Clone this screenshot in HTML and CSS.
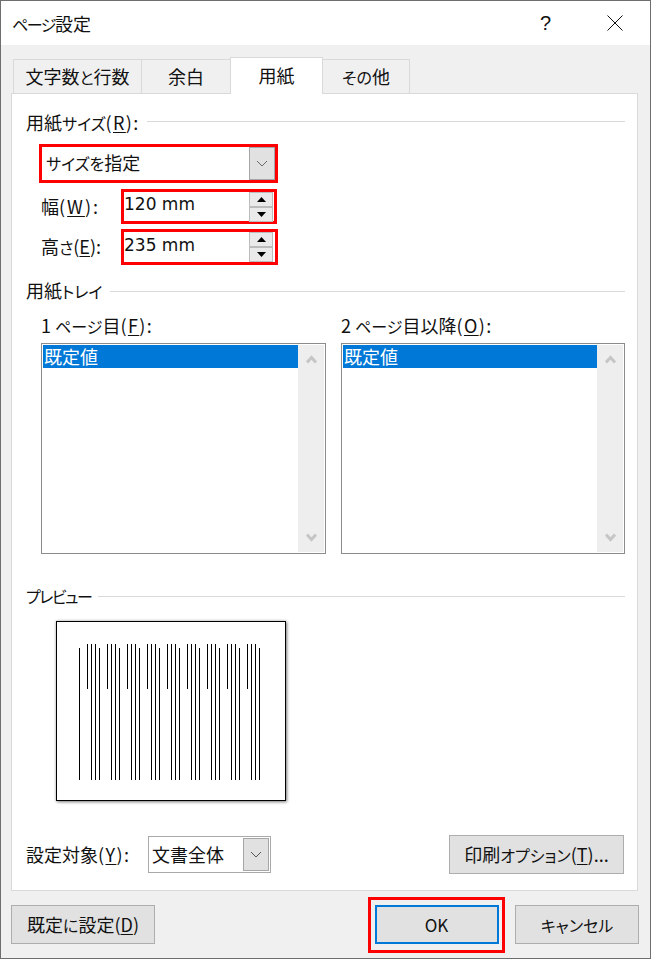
FILE: index.html
```html
<!DOCTYPE html>
<html lang="ja">
<head>
<meta charset="utf-8">
<title>ページ設定</title>
<link rel="stylesheet" href="styles.css">
</head>
<body>
<div class="window">
  <header class="titlebar">
    <span class="title"><span class="k k-tight">ページ</span>設定</span>
    <span class="help">?</span>
    <svg class="close" width="16" height="16" viewBox="0 0 16 16"><path d="M0.5 0.5L15.5 15.5M15.5 0.5L0.5 15.5" stroke="#111" stroke-width="1" fill="none"/></svg>
  </header>
  <nav class="tabs">
    <div class="tab tab-a"><span>文字数<span class="k">と</span>行数</span></div>
    <div class="tab tab-b">余白</div>
    <div class="tab tab-c active">用紙</div>
    <div class="tab tab-d"><span><span class="k">その</span>他</span></div>
  </nav>
  <main class="panel">
    <div class="head"><span>用紙<span class="k">サイズ</span><span class="l">(<u>R</u>):</span></span><i></i></div>
    <div class="red red-select">
      <span class="value"><span class="k">サイズを</span>指定</span>
      <span class="dd dd-tall"><svg width="12" height="7" viewBox="0 0 12 7"><path d="M1 1L6 6L11 1" stroke="#6a6a6a" fill="none"/></svg></span>
    </div>
    <div class="field">
      <span class="label">幅<span class="l-w">(<u>W</u>):</span></span>
      <div class="red red-spin">
        <span class="num">120 mm</span>
        <span class="spin">
          <b><svg width="9" height="5" viewBox="0 0 9 5"><path d="M4.5 0L9 5H0Z"/></svg></b>
          <b><svg width="9" height="5" viewBox="0 0 9 5"><path d="M0 0H9L4.5 5Z"/></svg></b>
        </span>
      </div>
    </div>
    <div class="field field-2">
      <span class="label">高<span class="k">さ</span>(<u>E</u>):</span>
      <div class="red red-spin">
        <span class="num">235 mm</span>
        <span class="spin">
          <b><svg width="9" height="5" viewBox="0 0 9 5"><path d="M4.5 0L9 5H0Z"/></svg></b>
          <b><svg width="9" height="5" viewBox="0 0 9 5"><path d="M0 0H9L4.5 5Z"/></svg></b>
        </span>
      </div>
    </div>
    <div class="head head-tray"><span>用紙<span class="k">トレイ</span></span><i></i></div>
    <div class="trays">
      <section class="tray">
        <div class="tray-label">1 <span class="k">ページ</span>目<span class="l">(<u>F</u>):</span></div>
        <div class="list">
          <div class="items"><div class="item">既定値</div></div>
          <div class="bar">
            <svg width="11" height="9" viewBox="0 0 11 9"><path d="M1 7.5L5.5 2.5L10 7.5" stroke="#c6c6c6" stroke-width="3" fill="none"/></svg>
            <svg width="11" height="9" viewBox="0 0 11 9"><path d="M1 1.5L5.5 6.5L10 1.5" stroke="#c6c6c6" stroke-width="3" fill="none"/></svg>
          </div>
        </div>
      </section>
      <section class="tray tray-r">
        <div class="tray-label">2 <span class="k">ページ</span>目以降<span class="l">(<u>O</u>):</span></div>
        <div class="list">
          <div class="items"><div class="item">既定値</div></div>
          <div class="bar">
            <svg width="11" height="9" viewBox="0 0 11 9"><path d="M1 7.5L5.5 2.5L10 7.5" stroke="#c6c6c6" stroke-width="3" fill="none"/></svg>
            <svg width="11" height="9" viewBox="0 0 11 9"><path d="M1 1.5L5.5 6.5L10 1.5" stroke="#c6c6c6" stroke-width="3" fill="none"/></svg>
          </div>
        </div>
      </section>
    </div>
    <div class="head head-prev"><span><span class="k k-tight">プレビュー</span></span><i></i></div>
    <div class="page">
      <svg width="228" height="178" viewBox="0 0 228 178">
        <g stroke="#000" stroke-width="1">
          <path d="M22.5 26V158"/>
          <path d="M30.5 22V67M34.5 22V158M38.5 22V158M42.5 26V158"/>
          <path d="M50.5 22V67M54.5 22V158M58.5 22V158M62.5 26V158"/>
          <path d="M70.5 22V67M74.5 22V158M78.5 22V158M82.5 26V158"/>
          <path d="M90.5 22V67M94.5 22V158M98.5 22V158M102.5 26V158"/>
          <path d="M110.5 22V67M114.5 22V158M118.5 22V158M122.5 26V158"/>
          <path d="M130.5 22V67M134.5 22V158M138.5 22V158M142.5 26V158"/>
          <path d="M150.5 22V67M154.5 22V158M158.5 22V158M162.5 26V158"/>
          <path d="M170.5 22V67M174.5 22V158M178.5 22V158M182.5 26V158"/>
          <path d="M190.5 22V67M194.5 22V158M198.5 22V158M202.5 26V158"/>
        </g>
      </svg>
    </div>
    <div class="apply">
      <span class="apply-label">設定対象<span class="l">(<u>Y</u>):</span></span>
      <div class="select">
        <span class="value">文書全体</span>
        <span class="dd"><svg width="12" height="7" viewBox="0 0 12 7"><path d="M1 1L6 6L11 1" stroke="#555" fill="none"/></svg></span>
      </div>
      <button class="btn btn-print">印刷<span class="k">オプション</span>(<u>T</u>)...</button>
    </div>
  </main>
  <footer class="footer">
    <button class="btn btn-default">既定<span class="k">に</span>設定(<u>D</u>)</button>
    <div class="red red-ok"><button class="btn btn-ok">OK</button></div>
    <button class="btn btn-cancel"><span class="k">キャンセル</span></button>
  </footer>
</div>
</body>
</html>
```
FILE: styles.css
```css
* { box-sizing: border-box; }
html, body { margin: 0; padding: 0; }
body {
  width: 651px;
  height: 959px;
  overflow: hidden;
  font-family: "Noto Sans CJK JP", "Noto Sans", sans-serif;
  font-size: 18px;
  line-height: 20px;
  color: #111;
  font-feature-settings: "palt";
}
.k { font-size: 16px; }
.k-tight { letter-spacing: -1.5px; }
.l { letter-spacing: 1.4px; }
.l-w { letter-spacing: 2px; }
u { text-underline-offset: 2px; text-decoration-thickness: 1px; }
.window {
  width: 651px;
  height: 959px;
  background: #f0f0f0;
  border: 1px solid #6e6e6e;
  display: flex;
  flex-direction: column;
}
.titlebar {
  height: 44px;
  background: #fff;
  display: flex;
  align-items: center;
  padding: 0 27px 0 11px;
  flex: none;
}
.title { flex: 1; }
.help {
  margin-right: 56px;
  font-family: "Liberation Sans", sans-serif;
  font-size: 20px;
}
.close { display: block; }

.tabs {
  display: flex;
  align-items: flex-end;
  height: 37px;
  margin: 12px 0 -1px 12px;
  flex: none;
}
.tab {
  height: 35px;
  border: 1px solid #d9d9d9;
  border-right: 0;
  border-bottom: 0;
  display: flex;
  align-items: center;
  justify-content: center;
  padding-bottom: 2px;
}
.tab-a { width: 128px; }
.tab-b { width: 89px; }
.tab-c { width: 93px; }
.tab-d { width: 87px; border-right: 1px solid #d9d9d9; border-left: 0; }
.tab.active {
  height: 37px;
  background: #fff;
  position: relative;
  z-index: 1;
  border-right: 1px solid #d9d9d9;
  padding-bottom: 3px;
}

.panel {
  width: 627px;
  height: 798px;
  margin-left: 10px;
  background: #fff;
  border: 1px solid #d9d9d9;
  padding: 17px 12px 0 14px;
  flex: none;
}
.head {
  display: flex;
  align-items: center;
  height: 20px;
}
.head > span { padding-top: 3px; }
.head i {
  flex: 1;
  height: 1px;
  background: #d9d9d9;
  margin-left: 7px;
}
.head-tray { margin-top: 16px; }
.head-tray > span, .head-prev > span { padding-top: 0; padding-bottom: 2px; }
.head-prev { margin-top: 32px; }

.red { border: 3px solid #f00; background: #fff; display: flex; }
.red-select {
  width: 239px;
  height: 39px;
  margin: 13px 0 0 13px;
  align-items: center;
  justify-content: space-between;
}
.value { padding: 0 0 2px 3px; }
.red-select .value { padding-left: 4px; }
.dd {
  width: 26px;
  height: 33px;
  background: #e1e1e1;
  border: 1px solid #a6a6a6;
  display: flex;
  align-items: center;
  justify-content: center;
  flex: none;
}
.field {
  display: flex;
  align-items: center;
  height: 35px;
  margin: 6px 0 0 15px;
}
.field-2 { margin-top: 5px; height: 36px; }
.label { width: 80px; padding-bottom: 2px; }
.red-spin {
  width: 156px;
  height: 100%;
  align-items: center;
  justify-content: space-between;
  padding-right: 1px;
}
.field-2 .red-spin { width: 157px; padding-right: 2px; }
.num {
  font-family: "DejaVu Sans", sans-serif;
  font-size: 17px;
  padding-bottom: 6px;
}
.field-2 .num { padding-bottom: 4px; }
.spin { display: flex; flex-direction: column; width: 24px; }
.spin b {
  height: 15px;
  background: #eaeaea;
  border: 1px solid #bcbcbc;
  display: flex;
  align-items: center;
  justify-content: center;
}
.spin svg { display: block; fill: #000; }

.trays {
  display: flex;
  gap: 15px;
  margin: 14px 0 0 15px;
}
.tray { width: 285px; }
.tray-r { width: 284px; }
.tray-label { height: 20px; }
.list {
  height: 211px;
  margin-top: 8px;
  border: 1px solid #8c8c8c;
  padding: 1px;
  display: flex;
}
.items { flex: 1; }
.item {
  height: 23px;
  background: #0078d7;
  color: #fff;
  line-height: 23px;
  padding-left: 1px;
}
.bar {
  width: 26px;
  background: #eee;
  display: flex;
  flex-direction: column;
  justify-content: space-between;
  align-items: center;
  padding: 10px 0;
}
.bar svg { display: block; }

.page {
  width: 230px;
  height: 180px;
  margin: 15px 0 0 30px;
  border: 1px solid #000;
  background: #fff;
  box-shadow: 1px 1px 3px rgba(0,0,0,.45), 0 0 3px rgba(0,0,0,.2);
}
.page svg { display: block; }

.apply {
  display: flex;
  align-items: center;
  height: 39px;
  margin-top: 34px;
}
.apply-label { width: 122px; padding-bottom: 2px; }
.select {
  width: 123px;
  height: 37px;
  border: 1px solid #a9a9a9;
  display: flex;
  align-items: center;
  justify-content: space-between;
  padding-right: 1px;
}
.select .dd { height: 33px; }
.btn {
  font: inherit;
  color: inherit;
  font-feature-settings: inherit;
  background: #e1e1e1;
  border: 1px solid #adadad;
  height: 39px;
  padding: 0;
  display: block;
}
.btn-print { width: 175px; margin: 0 1px 0 auto; }
.footer {
  flex: 1;
  display: flex;
  align-items: center;
  padding: 0 11px 0 10px;
}
.btn-default { width: 144px; margin-right: auto; }
.red-ok {
  width: 137px;
  height: 56px;
  align-items: center;
  justify-content: center;
  margin-right: 10px;
  background: #f0f0f0;
}
.btn-ok { width: 124px; border: 2px solid #0078d7; font-size: 17px; }
.btn-cancel { width: 124px; }
```
